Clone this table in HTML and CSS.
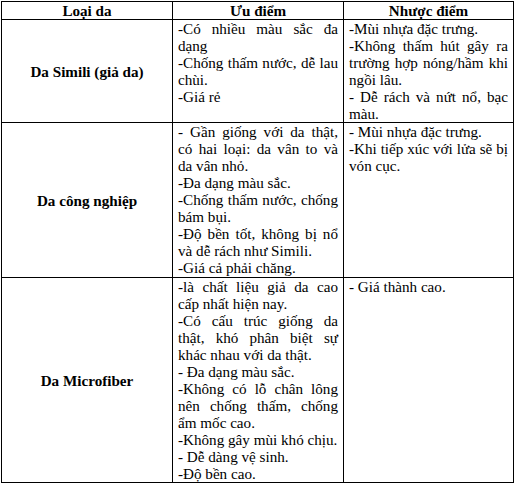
FILE: index.html
```html
<!DOCTYPE html>
<html lang="vi">
<head>
<meta charset="utf-8">
<link rel="stylesheet" href="styles.css">
</head>
<body>
<div class="wrap">
  <div class="grid">
    <div class="cell head">Loại da</div>
    <div class="cell head">Ưu điểm</div>
    <div class="cell head">Nhược điểm</div>

    <div class="cell name">Da Simili (giả da)</div>
    <div class="cell text r1">
      <p>-Có nhiều màu sắc đa dạng</p>
      <p>-Chống thấm nước, dễ lau chùi.</p>
      <p>-Giá rẻ</p>
    </div>
    <div class="cell text r1">
      <p>-Mùi nhựa đặc trưng.</p>
      <p>-Không thấm hút gây ra trường hợp nóng/hầm khi ngồi lâu.</p>
      <p>- Dễ rách và nứt nổ, bạc màu.</p>
    </div>

    <div class="cell name">Da công nghiệp</div>
    <div class="cell text r2">
      <p>- Gần giống với da thật, có hai loại: da vân to và da vân nhỏ.</p>
      <p>-Đa dạng màu sắc.</p>
      <p>-Chống thấm nước, chống bám bụi.</p>
      <p>-Độ bền tốt, không bị nổ và dễ rách như Simili.</p>
      <p>-Giá cả phải chăng.</p>
    </div>
    <div class="cell text r2">
      <p>- Mùi nhựa đặc trưng.</p>
      <p>-Khi tiếp xúc với lửa sẽ bị vón cục.</p>
    </div>

    <div class="cell name">Da Microfiber</div>
    <div class="cell text r3">
      <p>-là chất liệu giả da cao cấp nhất hiện nay.</p>
      <p>-Có cấu trúc giống da thật, khó phân biệt sự khác nhau với da thật.</p>
      <p>- Đa dạng màu sắc.</p>
      <p>-Không có lỗ chân lông nên chống thấm, chống ẩm mốc cao.</p>
      <p>-Không gây mùi khó chịu.</p>
      <p>- Dễ dàng vệ sinh.</p>
      <p>-Độ bền cao.</p>
    </div>
    <div class="cell text r3">
      <p>- Giá thành cao.</p>
    </div>
  </div>
</div>
</body>
</html>
```

FILE: styles.css
```css
html, body {
  margin: 0;
  padding: 0;
  background: #ffffff;
}

.wrap {
  padding: 1px 0 0 1px;
}

.grid {
  display: grid;
  grid-template-columns: 170px 170px 169px;
  gap: 1px;
  padding: 1px;
  width: max-content;
  background: #000000;
  font-family: "Liberation Serif", "Times New Roman", serif;
  font-size: 15.15px;
  line-height: 17px;
  color: #000000;
}

.cell {
  background: #ffffff;
  padding: 0 5px;
}

.head {
  font-weight: bold;
  text-align: center;
}

.name {
  font-weight: bold;
  display: flex;
  align-items: center;
  justify-content: center;
  text-align: center;
}

.text {
  text-align: justify;
}

.text p {
  margin: 0;
}

.r2 {
  padding-bottom: 1px;
}
```
